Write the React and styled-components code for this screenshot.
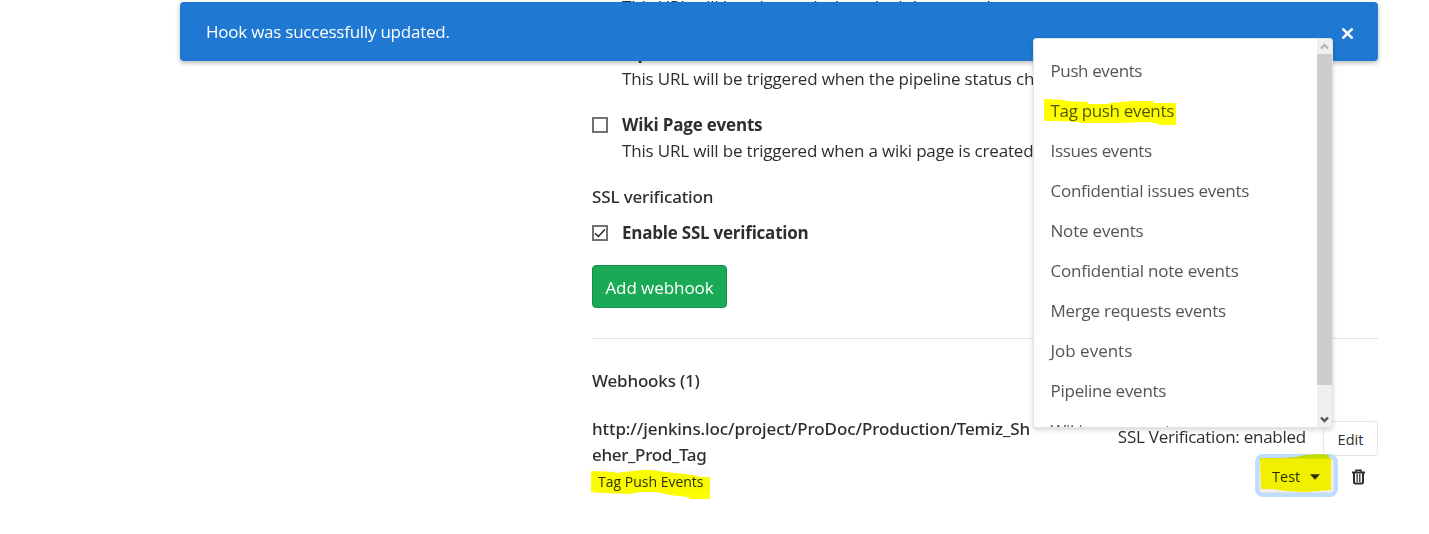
import React from 'react';
import styled, { createGlobalStyle } from 'styled-components';

const GlobalStyle = createGlobalStyle`
  * { box-sizing: border-box; }
  body {
    margin: 0;
    background: #fff;
    color: #2e2e2e;
    font-family: "Open Sans", "Noto Sans", sans-serif;
    font-size: 17px;
    line-height: 26px;
    overflow: hidden;
  }
`;

const Page = styled.div`
  position: relative;
  height: 534px;
  overflow: hidden;
  padding: 0 51px 0 592px;
`;

const Flash = styled.div`
  position: absolute;
  z-index: 2;
  top: 2px;
  left: 180px;
  right: 51px;
  height: 59px;
  padding: 0 25px 0 26px;
  display: flex;
  align-items: center;
  justify-content: space-between;
  border-radius: 4px;
  background: #1f78d1;
  color: #fff;
  box-shadow: 0 2px 5px rgba(0, 0, 0, 0.28);
`;

const CloseIcon = styled.svg`
  width: 11px;
  height: 11px;
  margin-top: 4px;
`;

const Text = styled.span`
  white-space: nowrap;
  letter-spacing: ${(p) => p.$track || 0}px;
  font-weight: ${(p) => p.$weight || 400};
`;

const MediumText = styled(Text)`
  font-family: "Noto Sans", sans-serif;
  font-weight: 500;
`;

const IndentedText = styled(Text)`
  padding-left: 30px;
`;

const Form = styled.form`
  display: flex;
  flex-direction: column;
  margin-top: -6px;
`;

const EventItem = styled.div`
  display: flex;
  gap: 14px;
  margin-bottom: 20px;
`;

const EventText = styled.div`
  display: flex;
  flex-direction: column;
`;

const Checkbox = styled.span`
  width: 16px;
  height: 16px;
  flex: none;
  margin-top: 5px;
  border: 2px solid #717171;
  display: flex;

  svg { width: 12px; height: 12px; }
`;

const SslField = styled.div`
  display: flex;
  flex-direction: column;
  margin-bottom: 19px;

  ${EventItem} { margin: 10px 0 0; }
`;

const SubmitButton = styled.button`
  align-self: flex-start;
  width: 135px;
  height: 43px;
  padding: 2px 0 0;
  border: 1px solid #168f48;
  border-radius: 4px;
  background: #1aaa55;
  color: #fff;
  font: inherit;
`;

const Divider = styled.hr`
  margin: 30px 0 29px;
  border: 0;
  border-top: 1px solid #e1e1e1;
`;

const Heading = styled.h5`
  display: flex;
  margin: 0 0 22px;
  font-size: 17px;
  line-height: 26px;
`;

const HookRow = styled.div`
  display: flex;
  justify-content: space-between;
  align-items: flex-start;
`;

const HookInfo = styled.div`
  display: flex;
  flex-direction: column;
  align-items: flex-start;
`;

const Badge = styled.span`
  position: relative;
  margin-top: 1px;
  width: 118px;
  height: 25px;
  padding-left: 6px;
  border-radius: 4px;
  background: #fafafc;
  font-size: 14px;
  line-height: 25px;
`;

const Actions = styled.div`
  display: flex;
  flex-direction: column;
  align-items: flex-end;
  margin-top: 5px;
`;

const ActionLine = styled.div`
  display: flex;
  align-items: center;
  gap: ${(p) => p.$gap}px;
  margin-top: ${(p) => p.$top || 0}px;
  padding-right: ${(p) => p.$right || 0}px;
`;

const SslState = styled.span`
  margin-top: -4px;
`;

const SmallButton = styled.button`
  position: relative;
  height: 35px;
  width: ${(p) => p.$width}px;
  padding: 2px 0 0 ${(p) => (p.$active ? 12 : 0)}px;
  display: flex;
  align-items: center;
  justify-content: ${(p) => (p.$active ? 'flex-start' : 'center')};
  gap: 10px;
  border: 1px solid ${(p) => (p.$active ? '#e2e2e6' : '#e5e5e5')};
  border-radius: 4px;
  background: ${(p) => (p.$active ? '#f0f0f0' : '#fff')};
  box-shadow: ${(p) => (p.$active ? '0 0 0 4px #bfddff' : 'none')};
  color: #2e2e2e;
  font-family: inherit;
  font-size: 14.5px;
`;

const Caret = styled.svg`
  width: 10px;
  height: 6px;
`;

const Trash = styled.svg`
  width: 13px;
  height: 16px;
  margin-top: 2px;
`;

const Marker = styled.svg`
  position: absolute;
  left: ${(p) => p.$left}px;
  top: ${(p) => p.$top}px;
  overflow: visible;
  mix-blend-mode: multiply;
  pointer-events: none;
  fill: #ff0;
`;

const Menu = styled.div`
  position: absolute;
  z-index: 3;
  top: 38px;
  left: 1033px;
  width: 300px;
  height: 390px;
  display: flex;
  justify-content: space-between;
  overflow: hidden;
  border: 1px solid #e1e3e6;
  border-radius: 3px;
  background: #fff;
  box-shadow: 0 2px 5px rgba(0, 0, 0, 0.16);
`;

const MenuList = styled.ul`
  margin: 0;
  padding: 12px 0 0;
  list-style: none;
`;

const MenuItem = styled.li`
  position: relative;
  height: 40px;
  padding-left: 16.5px;
  line-height: 40px;
  color: #555;
`;

const Scrollbar = styled.div`
  width: 15px;
  height: 100%;
  display: flex;
  flex-direction: column;
  background: #f0f0f0;
`;

const ScrollArrow = styled.svg`
  width: 15px;
  height: 15px;
  flex: none;
  fill: none;
  stroke: ${(p) => p.$color};
  stroke-width: 2.4;
`;

const ScrollThumb = styled.div`
  height: 331px;
  margin-bottom: auto;
  background: #cdcdcd;
`;

const menuItems = [
  ['Push events', -0.38],
  ['Tag push events', -0.33],
  ['Issues events', -0.33],
  ['Confidential issues events', -0.26],
  ['Note events', -0.2],
  ['Confidential note events', -0.21],
  ['Merge requests events', -0.25],
  ['Job events', 0],
  ['Pipeline events', -0.26],
  ['Wiki page events', -0.3],
];

function EventOption({ title, titleTrack, description, track, checked }) {
  return (
    <EventItem>
      <Checkbox>
        {checked && (
          <svg viewBox="0 0 12 12" fill="none" stroke="#222" strokeWidth="1.4">
            <path d="M1 6.2 4.3 9.5 11 2.4" />
          </svg>
        )}
      </Checkbox>
      <EventText>
        <Text $weight={700} $track={titleTrack}>{title}</Text>
        {description && <Text $track={track}>{description}</Text>}
      </EventText>
    </EventItem>
  );
}

export default function App() {
  return (
    <Page>
      <GlobalStyle />
      <Flash>
        <Text $track={-0.24}>Hook was successfully updated.</Text>
        <CloseIcon viewBox="0 0 11 11" fill="none" stroke="#fff" strokeWidth="2.6" strokeLinecap="round">
          <path d="M1.3 1.3 9.7 9.7M9.7 1.3 1.3 9.7" />
        </CloseIcon>
      </Flash>

      <Form>
        <EventItem>
          <IndentedText $track={-0.17}>This URL will be triggered when the job status changes</IndentedText>
        </EventItem>
        <EventOption
          title="Pipeline events"
          titleTrack={-0.22}
          description="This URL will be triggered when the pipeline status changes"
          track={-0.17}
        />
        <EventOption
          title="Wiki Page events"
          titleTrack={-0.2}
          description="This URL will be triggered when a wiki page is created/updated"
          track={-0.18}
        />
        <SslField>
          <MediumText $track={-0.14}>SSL verification</MediumText>
          <EventOption title="Enable SSL verification" titleTrack={-0.23} checked />
        </SslField>
        <SubmitButton type="button"><Text $track={-0.06}>Add webhook</Text></SubmitButton>
      </Form>

      <Divider />

      <Heading><MediumText $track={-0.18}>Webhooks (1)</MediumText></Heading>
      <HookRow>
        <HookInfo>
          <MediumText $track={-0.1}>http://jenkins.loc/project/ProDoc/Production/Temiz_Sh</MediumText>
          <MediumText $track={-0.33}>eher_Prod_Tag</MediumText>
          <Badge>
            <Text>Tag Push Events</Text>
            <Marker $left={-1} $top={1} width="119" height="29">
              <path d="M0 1 24 2V3L51 0H60L75 2 102 5 110 7H119V29H99L97 27 79 25 66 22H50L38 24 13 23 0 22Z" />
            </Marker>
          </Badge>
        </HookInfo>
        <Actions>
          <ActionLine $gap={17}>
            <SslState><Text $track={-0.25}>SSL Verification: enabled</Text></SslState>
            <SmallButton $width={55}>Edit</SmallButton>
          </ActionLine>
          <ActionLine $gap={18} $top={2} $right={13}>
            <SmallButton $width={75} $active>
              <Text>Test</Text>
              <Caret viewBox="0 0 10 6"><path d="M0 .3H10L5 5.7Z" fill="#2e2e2e" /></Caret>
              <Marker $left={0} $top={-5} width="71" height="38">
                <path d="M0 4 24 4 36 3 45 1 58 0 69 1V4H71V36L58 37 45 38 26 37 11 35H1Z" />
              </Marker>
            </SmallButton>
            <Trash viewBox="0 0 13 16" fill="none" stroke="#2e2e2e">
              <path d="M0 3.5H13" strokeWidth="2" />
              <path d="M4 3V1.3H9V3" strokeWidth="1.5" />
              <path d="M2 4V13.2Q2 14.6 3.3 14.6H9.7Q11 14.6 11 13.2V4" strokeWidth="2" />
              <path d="M5.2 5V13M7.8 5V13" strokeWidth="1.3" />
            </Trash>
          </ActionLine>
        </Actions>
      </HookRow>

      <Menu>
        <MenuList>
          {menuItems.map(([label, track], i) => (
            <MenuItem key={label}>
              <Text $track={track}>{label}</Text>
              {i === 1 && (
                <Marker $left={10} $top={8} width="132" height="26">
                  <path d="M0 0 21 1V2L44 3V5H65V4L89 2H110V4L132 4V26H115V25L105 23 73 24H36V23L14 22H0Z" />
                </Marker>
              )}
            </MenuItem>
          ))}
        </MenuList>
        <Scrollbar>
          <ScrollArrow viewBox="0 0 15 15" $color="#b3b3b3"><path d="M4 9.5 7.5 6 11 9.5" /></ScrollArrow>
          <ScrollThumb />
          <ScrollArrow viewBox="0 0 15 15" $color="#555"><path d="M4 5.5 7.5 9 11 5.5" /></ScrollArrow>
        </Scrollbar>
      </Menu>
    </Page>
  );
}
